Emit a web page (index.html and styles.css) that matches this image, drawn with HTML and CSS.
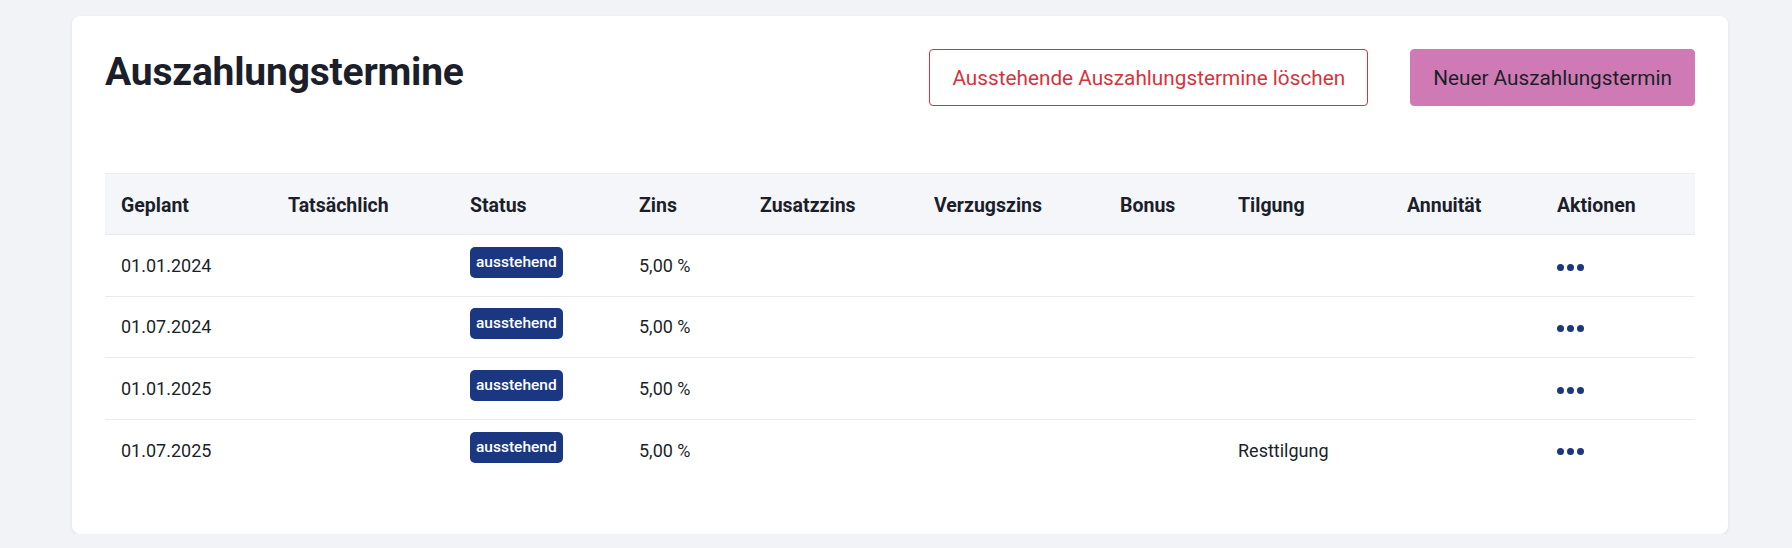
FILE: index.html
```html
<!DOCTYPE html>
<html lang="de">
<head>
<meta charset="utf-8">
<title>Auszahlungstermine</title>
<link rel="stylesheet" href="styles.css">
</head>
<body>
<div class="page">
  <section class="card">
    <header class="card-head">
      <h1 class="title">Auszahlungstermine</h1>
      <div class="actions">
        <button class="btn btn-danger">Ausstehende Auszahlungstermine löschen</button>
        <button class="btn btn-primary">Neuer Auszahlungstermin</button>
      </div>
    </header>
    <table class="table">
      <colgroup>
        <col class="c1"><col class="c2"><col class="c3"><col class="c4"><col class="c5">
        <col class="c6"><col class="c7"><col class="c8"><col class="c9"><col class="c10">
      </colgroup>
      <thead>
        <tr>
          <th>Geplant</th><th>Tatsächlich</th><th>Status</th><th>Zins</th><th>Zusatzzins</th>
          <th>Verzugszins</th><th>Bonus</th><th>Tilgung</th><th>Annuität</th><th>Aktionen</th>
        </tr>
      </thead>
      <tbody>
        <tr>
          <td>01.01.2024</td><td></td><td><span class="badge">ausstehend</span></td><td>5,00 %</td><td></td>
          <td></td><td></td><td></td><td></td><td><span class="dots"><i></i><i></i><i></i></span></td>
        </tr>
        <tr>
          <td>01.07.2024</td><td></td><td><span class="badge">ausstehend</span></td><td>5,00 %</td><td></td>
          <td></td><td></td><td></td><td></td><td><span class="dots"><i></i><i></i><i></i></span></td>
        </tr>
        <tr>
          <td>01.01.2025</td><td></td><td><span class="badge">ausstehend</span></td><td>5,00 %</td><td></td>
          <td></td><td></td><td></td><td></td><td><span class="dots"><i></i><i></i><i></i></span></td>
        </tr>
        <tr>
          <td>01.07.2025</td><td></td><td><span class="badge">ausstehend</span></td><td>5,00 %</td><td></td>
          <td></td><td></td><td>Resttilgung</td><td></td><td><span class="dots"><i></i><i></i><i></i></span></td>
        </tr>
      </tbody>
    </table>
  </section>
</div>
</body>
</html>
```
FILE: styles.css
```css
* { box-sizing: border-box; }
html, body {
  margin: 0;
  background: #f2f3f7;
  font-family: Roboto, "Liberation Sans", Arial, sans-serif;
  color: #1c1f2a;
}
.page {
  padding: 16px 64px 0 72px;
}
.card {
  background: #ffffff;
  border-radius: 8px;
  box-shadow: 0 1px 3px rgba(20, 30, 60, 0.10);
  padding: 33px 33px 53px 33px;
}
.card-head {
  display: flex;
  justify-content: space-between;
  align-items: flex-start;
}
.title {
  margin: 0;
  font-size: 39px;
  line-height: 1.2;
  font-weight: 700;
  letter-spacing: -0.2px;
  color: #1c1f2a;
}
.actions {
  display: flex;
  gap: 42px;
}
.btn {
  height: 57px;
  padding: 0 22px;
  font-family: inherit;
  font-size: 20.75px;
  border-radius: 4px;
  cursor: pointer;
}
.btn-danger {
  background: #ffffff;
  color: #d6333d;
  border: 1px solid #d6333d;
}
.btn-primary {
  background: #d07ab5;
  color: #1c1f2a;
  border: 1px solid #d07ab5;
}
.table {
  margin-top: 67px;
  width: 100%;
  border-collapse: collapse;
  table-layout: fixed;
}
.c1 { width: 167px; }
.c2 { width: 182px; }
.c3 { width: 169px; }
.c4 { width: 121px; }
.c5 { width: 174px; }
.c6 { width: 186px; }
.c7 { width: 118px; }
.c8 { width: 169px; }
.c9 { width: 150px; }
.c10 { width: 154px; }
.table thead tr {
  background: #f5f6fa;
  border-top: 1px solid #eceef2;
  border-bottom: 1px solid #e6e8ec;
}
.table th {
  height: 61px;
  padding: 3px 16px 0 16px;
  text-align: left;
  font-size: 19.5px;
  font-weight: 700;
}
.table tbody tr {
  border-bottom: 1px solid #e9ebee;
}
.table tbody tr:last-child {
  border-bottom: none;
}
.table td {
  height: 61.5px;
  padding: 0 16px;
  font-size: 18px;
  vertical-align: middle;
}
.badge {
  display: inline-block;
  background: #1c3782;
  color: #ffffff;
  font-size: 15.5px;
  font-weight: 500;
  height: 31px;
  line-height: 31px;
  padding: 0 6px;
  border-radius: 5px;
  vertical-align: middle;
  position: relative;
  top: -3px;
}
.dots {
  display: inline-flex;
  gap: 3px;
  vertical-align: middle;
}
.dots i {
  display: block;
  width: 7px;
  height: 7px;
  border-radius: 50%;
  background: #1c3782;
}
```
